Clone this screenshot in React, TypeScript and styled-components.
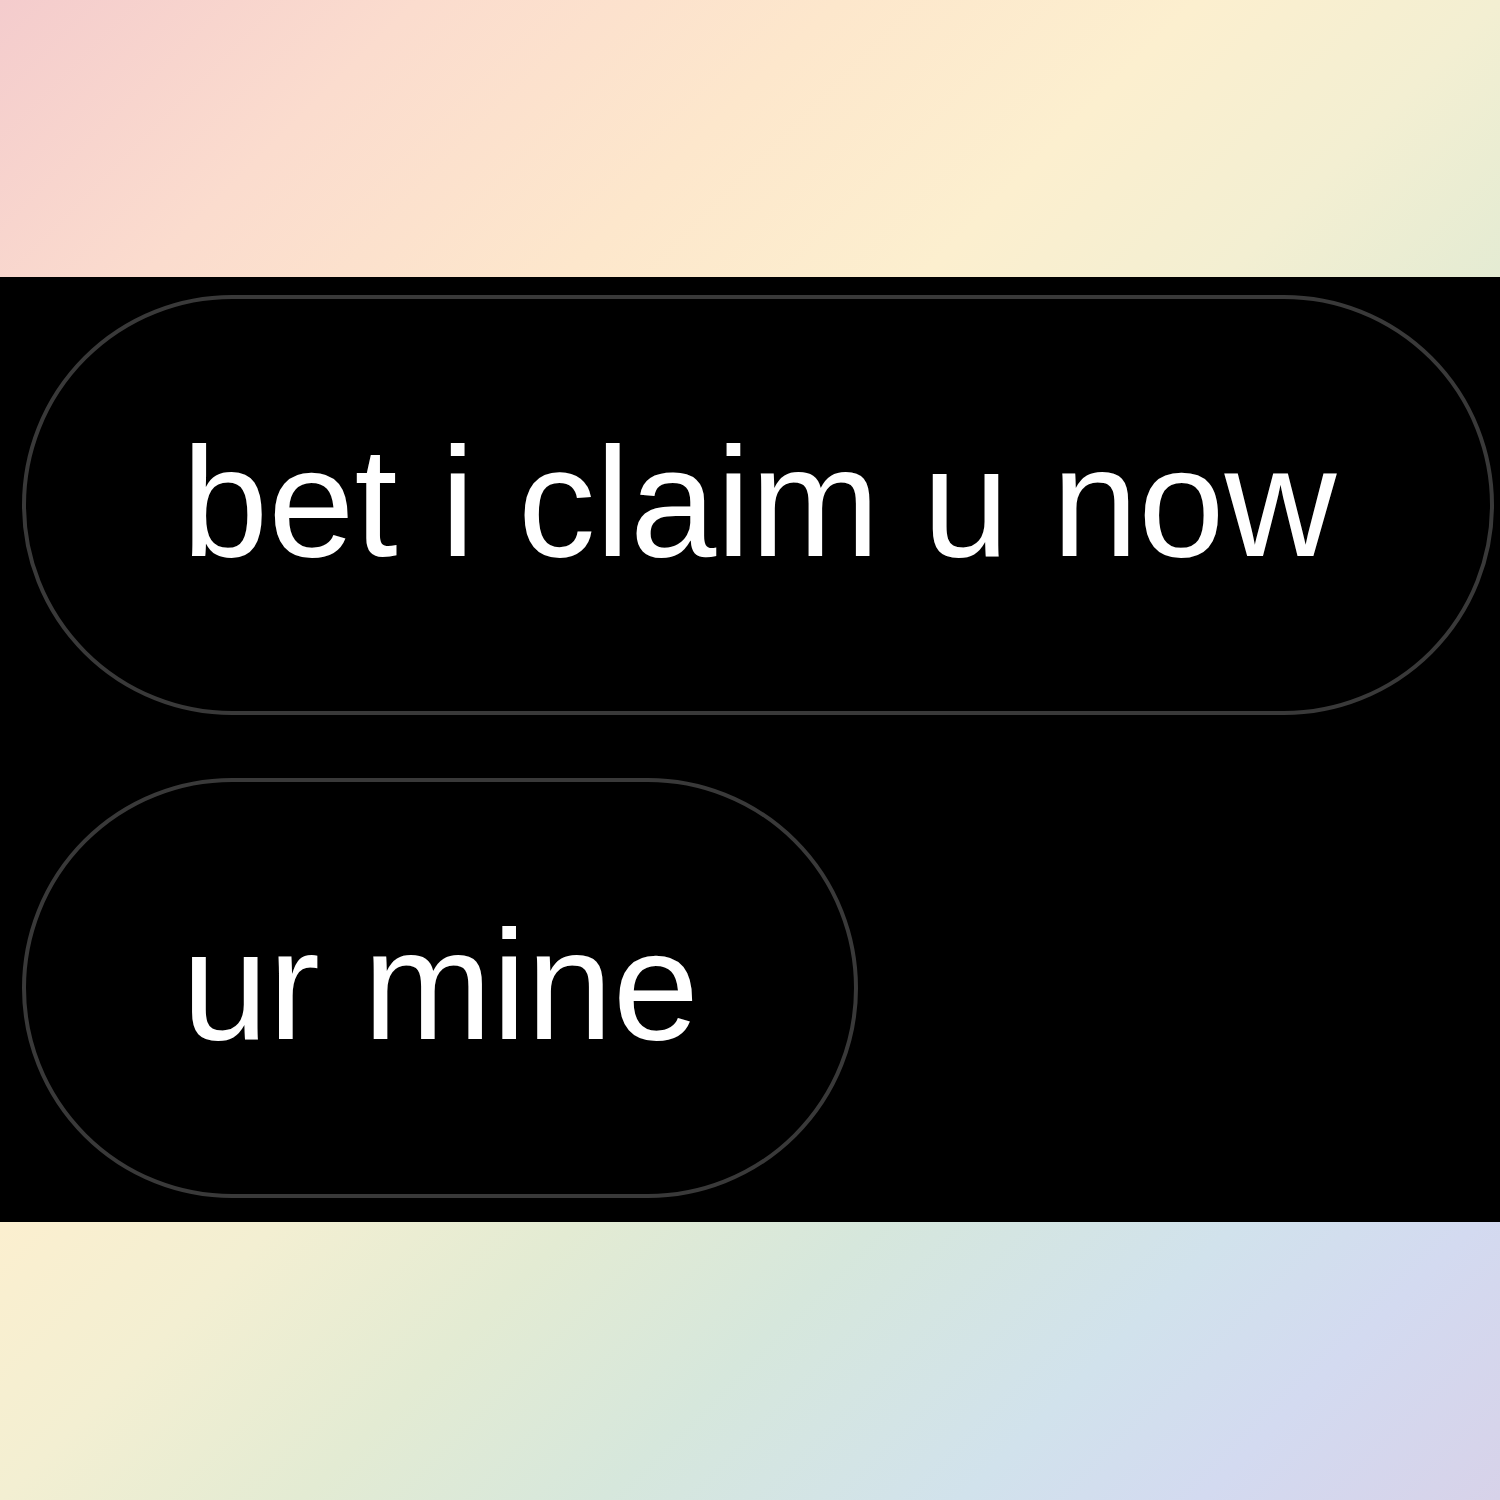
import React from "react";
import styled, { createGlobalStyle } from "styled-components";

const GlobalStyle = createGlobalStyle`
  html, body {
    margin: 0;
    padding: 0;
  }
  body {
    font-family: "Liberation Sans", Arial, sans-serif;
  }
`;

const Page = styled.div`
  width: 1500px;
  height: 1500px;
  display: flex;
  flex-direction: column;
  background: linear-gradient(
    135deg,
    #f4cccd 0%,
    #fbdcce 14%,
    #fde7cc 28%,
    #fcefcf 40%,
    #f3efd2 50%,
    #e3ebd3 60%,
    #d6e7dc 70%,
    #d1e2ec 82%,
    #d3daf0 90%,
    #d7d2e9 100%
  );
`;

const Thread = styled.div`
  margin-top: 277px;
  height: 945px;
  box-sizing: border-box;
  background: #000;
  padding: 18px 6px 0 22px;
  display: flex;
  flex-direction: column;
  align-items: flex-start;
  gap: 63px;
`;

const Bubble = styled.div<{ $width: number }>`
  box-sizing: border-box;
  width: ${(p) => p.$width}px;
  height: 420px;
  border: 4px solid #393939;
  border-radius: 210px;
  padding: 0 0 0 156px;
  display: flex;
  align-items: center;
  color: #ffffff;
  font-family: "Liberation Sans", Arial, sans-serif;
  font-size: 155px;
  font-weight: 400;
  white-space: nowrap;
`;

const Text = styled.span`
  display: block;
  line-height: 1;
  transform: translateY(-3px);
`;

export default function App() {
  return (
    <>
      <GlobalStyle />
      <Page>
        <Thread>
          <Bubble $width={1472}>
            <Text>bet i claim u now</Text>
          </Bubble>
          <Bubble $width={836}>
            <Text>ur mine</Text>
          </Bubble>
        </Thread>
      </Page>
    </>
  );
}
